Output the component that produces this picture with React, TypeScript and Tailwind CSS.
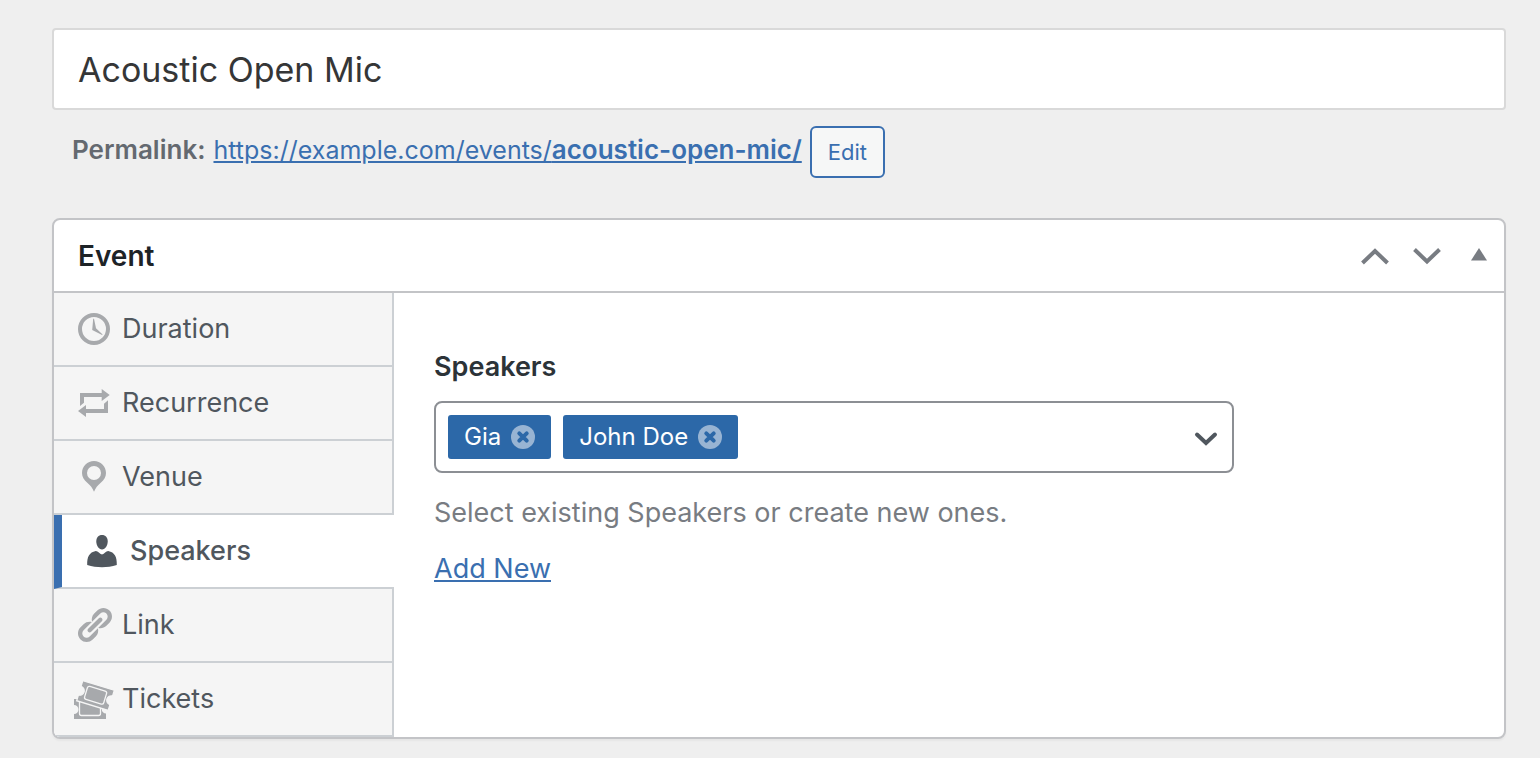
import { useState } from 'react'
import type { ReactNode } from 'react'
import clsx from 'clsx'

interface IconProps {
  className?: string
}

function ClockIcon({ className }: IconProps) {
  return (
    <svg className={className} viewBox="0 0 40 40" aria-hidden="true">
      <circle cx="20" cy="20" r="14" fill="none" stroke="currentColor" strokeWidth="4" />
      <path fill="currentColor" d="M19.2 9.8h.8l2 9.4 6.6 6.3-.5.6L18.2 21z" />
    </svg>
  )
}

function RepeatIcon({ className }: IconProps) {
  return (
    <svg className={className} viewBox="0 0 40 40" fill="currentColor" aria-hidden="true">
      <path d="M6 10h21.7V6l8 6-8 6v-4H10v5.8L6 23z" />
      <path d="M34 30H12v4l-8-6 8-6v4h18v-5.3l4-3.4z" />
    </svg>
  )
}

function PinIcon({ className }: IconProps) {
  return (
    <svg className={className} viewBox="0 0 40 40" fill="currentColor" aria-hidden="true">
      <path
        fillRule="evenodd"
        d="M20 4c6.600 0 12 5.400 12 12 0 4-2 7-5 9.400-3.500 2.900-5.500 5.600-7 9.300-1.500-3.700-3.500-6.400-7-9.300-3-2.400-5-5.400-5-9.400C8 9.400 13.400 4 20 4zm0 5a7 7 0 1 0 0 14 7 7 0 0 0 0-14z"
      />
    </svg>
  )
}

function PersonIcon({ className }: IconProps) {
  return (
    <svg className={className} viewBox="0 0 40 40" fill="currentColor" aria-hidden="true">
      <path d="M20 4c3.600 0 5.700 2.500 5.700 6.400 0 4.100-2.500 8-5.700 8s-5.700-3.900-5.700-8C14.300 6.500 16.400 4 20 4z" />
      <path d="M20 23.400c2.500-.4 3.800-3.200 6.200-3.400 6.600 1.400 8.800 5.800 8.600 14-9.600 2.900-20 2.900-29.600 0-.2-8.200 2-12.600 8.600-14 2.400.2 3.700 3 6.200 3.400z" />
    </svg>
  )
}

function LinkIcon({ className }: IconProps) {
  return (
    <svg className={className} viewBox="0 0 20 20" fill="currentColor" aria-hidden="true">
      <path d="M17.740 2.760c1.680 1.690 1.680 4.410 0 6.100l-1.530 1.520c-1.120 1.120-2.700 1.470-4.140 1.090l2.620-2.610.76-.77.76-.76c.84-.84.84-2.200 0-3.040-.84-.85-2.200-.85-3.040 0l-.77.76-3.380 3.380c-.37-1.440-.02-3.020 1.100-4.140l1.520-1.530c1.690-1.680 4.420-1.680 6.100 0zM8.590 13.430l5.340-5.340c.42-.42.42-1.100 0-1.520-.44-.43-1.130-.39-1.530 0l-5.330 5.340c-.42.42-.42 1.100 0 1.520.44.43 1.130.39 1.520 0zm-.76 2.290l4.140-4.150c.38 1.440.03 3.020-1.090 4.140l-1.520 1.530c-1.690 1.680-4.410 1.680-6.100 0-1.680-1.680-1.680-4.420 0-6.100l1.530-1.520c1.120-1.120 2.700-1.470 4.140-1.100l-4.140 4.150c-.85.84-.85 2.200 0 3.050.84.84 2.200.84 3.040 0z" />
    </svg>
  )
}

function TicketsIcon({ className }: IconProps) {
  return (
    <svg className={className} viewBox="0 0 40 40" aria-hidden="true">
      <path fill="currentColor" d="M0 20h32v6a3.500 3.500 0 0 0 0 8.500V40H0v-5a4.500 4.500 0 0 0 0-9z" />
      <rect x="5.500" y="21" width="21" height="15.500" rx="2" fill="none" stroke="#f5f5f5" strokeWidth="1.300" />
      <g transform="rotate(17 21.500 16.500)">
        <path
          fill="currentColor"
          stroke="#f5f5f5"
          strokeWidth="1.300"
          d="M5 6h33v6a4.500 4.500 0 0 0 0 9v6H5v-6a4.500 4.500 0 0 0 0-9z"
        />
        <rect x="11.500" y="9.500" width="20" height="13.500" rx="2" fill="none" stroke="#f5f5f5" strokeWidth="1.300" />
      </g>
    </svg>
  )
}

interface Tab {
  id: string
  label: string
  Icon: (props: IconProps) => ReactNode
}

const TABS: Tab[] = [
  { id: 'duration', label: 'Duration', Icon: ClockIcon },
  { id: 'recurrence', label: 'Recurrence', Icon: RepeatIcon },
  { id: 'venue', label: 'Venue', Icon: PinIcon },
  { id: 'speakers', label: 'Speakers', Icon: PersonIcon },
  { id: 'link', label: 'Link', Icon: LinkIcon },
  { id: 'tickets', label: 'Tickets', Icon: TicketsIcon },
]

interface SpeakerTagProps {
  name: string
  onRemove: () => void
}

function SpeakerTag({ name, onRemove }: SpeakerTagProps) {
  return (
    <span className="flex h-11 items-center gap-2.5 rounded-[3px] bg-[#2c68a8] px-4 text-2xl text-white">
      {name}
      <button type="button" onClick={onRemove} aria-label={`Remove ${name}`} className="size-6 rounded-full bg-[#98b4d3]">
        <svg className="size-6" viewBox="0 0 24 24" fill="none" aria-hidden="true">
          <path
            d="M8.300 8.300l7.400 7.400M15.700 8.300l-7.400 7.400"
            stroke="#2c68a8"
            strokeWidth="4"
            strokeLinecap="round"
          />
        </svg>
      </button>
    </span>
  )
}

function SpeakersField() {
  const [speakers, setSpeakers] = useState(['Gia', 'John Doe'])

  return (
    <div className="flex max-w-[800px] flex-col">
      <label htmlFor="speakers" className="text-[27px] leading-9 font-semibold text-[#2c3338]">
        Speakers
      </label>
      <div className="mt-4 flex h-[72px] items-center gap-3 rounded-lg border-2 border-[#8c8f94] bg-white px-3">
        {speakers.map((name) => (
          <SpeakerTag
            key={name}
            name={name}
            onRemove={() => setSpeakers(speakers.filter((s) => s !== name))}
          />
        ))}
        <input id="speakers" type="text" className="h-11 min-w-0 flex-1 bg-transparent text-2xl outline-none" />
        <button type="button" aria-label="Show speakers" className="text-[#50575e]">
          <svg className="size-7" viewBox="0 0 28 28" fill="none" aria-hidden="true">
            <path d="M5 11.500l9 8.500 9-8.500" stroke="currentColor" strokeWidth="4" strokeLinecap="round" />
          </svg>
        </button>
      </div>
      <p className="mt-5 text-[27px] leading-10 text-[#787c82]">Select existing Speakers or create new ones.</p>
      <a href="#" className="mt-4 self-start text-[27px] leading-10 text-[#3a6fb0] underline">
        Add New
      </a>
    </div>
  )
}

export default function App() {
  const [title, setTitle] = useState('Acoustic Open Mic')
  const [activeTab, setActiveTab] = useState('speakers')

  return (
    <main className="min-h-screen bg-[#efefef] pt-7 pr-[34px] pb-4 pl-[52px] font-['Inter',sans-serif]">
      <input
        type="text"
        aria-label="Title"
        value={title}
        onChange={(e) => setTitle(e.target.value)}
        className="block h-[82px] w-full rounded border-2 border-[#d9d9d9] bg-white px-6 text-[34px] text-[#353637] outline-none"
      />

      {/* Permalink */}
      <div className="mt-4 flex items-start pl-5 text-[26px] leading-[48px] text-[#646970]">
        <strong className="font-semibold">Permalink:</strong>
        <a href="#" className="ml-2 text-[#3a6fb0] underline">
          <span className="text-[25px]">https://example.com/events/</span>
          <span className="font-semibold">acoustic-open-mic/</span>
        </a>
        <button
          type="button"
          className="ml-2 h-[52px] rounded-md border-2 border-[#3a6fb0] bg-[#f6f7f7] px-4 text-[22px] text-[#3a6fb0]"
        >
          Edit
        </button>
      </div>

      {/* Event box */}
      <section className="mt-10 overflow-hidden rounded-lg border-2 border-[#c3c4c7] bg-white shadow-[0_2px_2px_rgba(0,0,0,0.04)]">
        <header className="flex h-[73px] items-center border-b-2 border-[#c3c4c7] pr-[17px] pl-6 text-[#787c82]">
          <h2 className="flex-1 text-[28px] font-semibold text-[#1d2327]">Event</h2>
          <div className="flex items-center gap-6">
            <button type="button" aria-label="Move up">
              <svg className="size-7" viewBox="0 0 28 28" fill="none" aria-hidden="true">
                <path d="M1.500 21L14 9l12.500 12" stroke="currentColor" strokeWidth="4" />
              </svg>
            </button>
            <button type="button" aria-label="Move down">
              <svg className="size-7" viewBox="0 0 28 28" fill="none" aria-hidden="true">
                <path d="M1.500 7.500l12.500 12 12.500-12" stroke="currentColor" strokeWidth="4" />
              </svg>
            </button>
            <button type="button" aria-label="Toggle panel" className="pl-1.5">
              <svg className="h-7 w-4" viewBox="0 0 16 28" fill="currentColor" aria-hidden="true">
                <path d="M8 6l8 12.500H0z" />
              </svg>
            </button>
          </div>
        </header>

        <div className="flex">
          <nav role="tablist" aria-label="Event settings" aria-orientation="vertical" className="flex w-[340px] shrink-0 flex-col">
            {TABS.map(({ id, label, Icon }) => {
              const active = id === activeTab
              return (
                <button
                  key={id}
                  type="button"
                  role="tab"
                  aria-selected={active}
                  onClick={() => setActiveTab(id)}
                  className={clsx(
                    'flex h-[74px] items-center gap-2 border-b-2 border-b-[#ccd0d4] pl-5 text-[27px] text-[#50575e]',
                    active
                      ? 'border-l-8 border-l-[#3a6fb0] bg-white font-medium'
                      : 'border-r-2 border-r-[#ccd0d4] bg-[#f5f5f5]'
                  )}
                >
                  <Icon className={clsx('size-10 shrink-0', active ? 'text-[#50575e]' : 'text-[#a7a9ac]')} />
                  {label}
                </button>
              )
            })}
          </nav>
          <div role="tabpanel" className="min-w-0 flex-1 px-10 pt-14">
            <SpeakersField />
          </div>
        </div>
      </section>
    </main>
  )
}
